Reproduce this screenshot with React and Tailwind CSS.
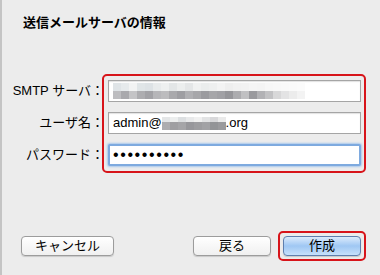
import React from 'react';

const smtpTop = ['#dfe4e7', '#e6eaec', '#f2f3f3', '#e0e5e7', '#dde2e5', '#e8ebec', '#eef0f0', '#e3e6e7', '#eceeee', '#e4e6e7', '#f0f1f1', '#ebeded', '#eeefef', '#f3f3f3', '#eeeeee', '#f1f1f1', '#f2f2f2', '#f5f5f5', '#f4f4f4', '#f7f7f7', '#f8f8f8', '#f9f9f9', '#fafafa', '#fbfbfb'];
const smtpBottom = ['#bdbdc0', '#a9a9ad', '#c4c4c6', '#adadb0', '#a2a2a6', '#b6b6b9', '#bcbcbe', '#a9a9ac', '#9e9ea2', '#b0b0b3', '#a7a7aa', '#9b9b9f', '#a6a6a9', '#a1a1a5', '#96969a', '#acacaf', '#c0c0c2', '#9a9a9e', '#b2b2b5', '#c2c2c4', '#d8d8d9', '#e3e3e4', '#ececec', '#f3f3f3'];
const userTop = ['#e4e6e7', '#eceeee', '#dcdfe1', '#e8e9ea', '#f0f0f0', '#e2e3e4', '#d8d8da', '#eaeaea'];
const userBottom = ['#adadb0', '#9f9fa2', '#a5a5a8', '#97979b', '#9d9da0', '#a2a2a5', '#939497', '#9a9a9d'];

const Pixels = ({ top, bottom, w, th, bh }) => (
  <div className="flex flex-col">
    <div className="flex">
      {top.map((c, i) => (
        <div key={i} style={{ width: w, height: th, backgroundColor: c }} />
      ))}
    </div>
    <div className="flex">
      {bottom.map((c, i) => (
        <div key={i} style={{ width: w, height: bh, backgroundColor: c }} />
      ))}
    </div>
  </div>
);

const Label = ({ children }) => (
  <div className="h-[22px] flex items-center justify-end whitespace-nowrap">{children}</div>
);

export default function App() {
  return (
    <div
      className="w-[380px] h-[275px] bg-[#ececec] border-l-[2px] border-[#c4c4c4] flex flex-col text-[13px] text-black overflow-hidden"
      style={{ fontFamily: '"Liberation Sans", "Noto Sans CJK JP", sans-serif' }}
    >
      <div className="pt-[13px] pl-[21px] leading-[20px] font-bold">送信メールサーバの情報</div>

      <div className="flex mt-[41px]">
        <div className="w-[102px] flex flex-col gap-[10px] pt-[6px] leading-[22px]">
          <Label>SMTP サーバ：</Label>
          <Label>ユーザ名：</Label>
          <Label>パスワード：</Label>
        </div>
        <div className="ml-[-2px] w-[264px] border-[2px] border-[#d7141a] rounded-[5px] pt-[4px] pb-[5px] pl-[4px] pr-[3px] flex flex-col gap-[10px]">
          <div className="h-[22px] bg-white border border-[#a5a5a5] shadow-[inset_0_1px_1px_rgba(0,0,0,0.12)] pl-[4px] flex items-center">
            <Pixels top={smtpTop} bottom={smtpBottom} w="8px" th="8px" bh="8px" />
          </div>
          <div className="h-[22px] bg-white border border-[#a5a5a5] shadow-[inset_0_1px_1px_rgba(0,0,0,0.12)] pl-[4px] flex items-center leading-[22px]">
            <span>admin@</span>
            <div className="mt-[1px]">
              <Pixels top={userTop} bottom={userBottom} w="8px" th="5px" bh="8px" />
            </div>
            <span>.org</span>
          </div>
          <div className="h-[22px] bg-white border-[2px] border-[#7eaadf] rounded-[2px] shadow-[0_0_2px_1px_#a9c8ec] pl-[3px] flex items-center">
            <span className="text-[16px] leading-[16px] tracking-[1.6px]">••••••••••</span>
          </div>
        </div>
      </div>

      <div className="flex items-center justify-between mt-[58px] pl-[19px] pr-[14px]">
        <button className="w-[93px] h-[20px] rounded-[4px] border border-[#9c9c9c] bg-linear-to-b from-white to-[#f0f0f0] shadow-[0_1px_1px_rgba(0,0,0,0.15)] leading-[18px] text-center">
          キャンセル
        </button>
        <div className="flex items-center gap-[7px]">
          <button className="w-[78px] h-[20px] rounded-[4px] border border-[#9c9c9c] bg-linear-to-b from-white to-[#f0f0f0] shadow-[0_1px_1px_rgba(0,0,0,0.15)] leading-[18px] text-center">
            戻る
          </button>
          <div className="border-[2px] border-[#d7141a] rounded-[5px] p-[3px]">
            <button className="block w-[78px] h-[20px] rounded-[4px] border border-[#5f7fae] bg-linear-to-b from-[#dcebfc] via-[#9fc7f3] to-[#c6e1fb] shadow-[0_1px_1px_rgba(0,0,0,0.15)] leading-[18px] text-center">
              作成
            </button>
          </div>
        </div>
      </div>
    </div>
  );
}
